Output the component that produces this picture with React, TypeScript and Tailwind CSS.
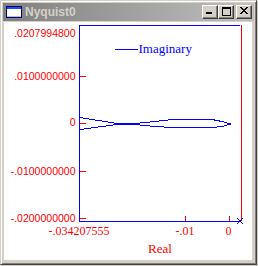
export default function App() {
  const blue = '#0000ff'
  const red = '#ff0000'

  const yLabels = [
    { text: '.0207994800', y: 37 },
    { text: '.0100000000', y: 80 },
    { text: '0', y: 126 },
    { text: '-.0100000000', y: 175 },
    { text: '-.0200000000', y: 222 },
  ]
  const yTicks = [76.5, 123.5, 171.5, 218.5]

  return (
    <div className="w-[258px] h-[266px] bg-[#d4d0c8]">
      {/* Window frame */}
      <div className="w-[257px] h-[265px] flex flex-col p-[2px] bg-[#d4d0c8] border border-t-[#d4d0c8] border-l-[#d4d0c8] border-r-[#404040] border-b-[#404040] shadow-[inset_1px_1px_#ffffff,inset_-1px_-1px_#808080]">
        {/* Title bar (inactive) */}
        <div className="h-[18px] flex items-center pl-[3px] pr-[2px] bg-linear-to-r from-[#808080] to-[#c0c0c0]">
          <svg width="16" height="12" viewBox="0 0 16 12" shapeRendering="crispEdges">
            <rect x="0" y="0" width="16" height="12" fill="#000080" />
            <rect x="1" y="1" width="14" height="2" fill="#2050e0" />
            <rect x="1" y="3" width="14" height="8" fill="#ffffff" />
            <rect x="1" y="10" width="14" height="1" fill="#c0c0c0" />
          </svg>
          <span className="ml-[3px] text-[12px] font-bold leading-none text-[#d4d0c8] font-['Liberation_Sans',Arial,sans-serif]">
            Nyquist0
          </span>
          <div className="ml-auto flex items-center">
            <TitleButton>
              <rect x="0" y="5" width="6" height="2" fill="#000" />
            </TitleButton>
            <TitleButton>
              <rect x="0" y="0" width="9" height="2" fill="#000" />
              <rect x="0" y="0" width="1" height="9" fill="#000" />
              <rect x="8" y="0" width="1" height="9" fill="#000" />
              <rect x="0" y="8" width="9" height="1" fill="#000" />
            </TitleButton>
            <div className="w-[2px]" />
            <TitleButton>
              <rect x="0" y="0" width="2" height="1" fill="#000" />
              <rect x="6" y="0" width="2" height="1" fill="#000" />
              <rect x="1" y="1" width="2" height="1" fill="#000" />
              <rect x="5" y="1" width="2" height="1" fill="#000" />
              <rect x="2" y="2" width="4" height="1" fill="#000" />
              <rect x="3" y="3" width="2" height="1" fill="#000" />
              <rect x="2" y="4" width="4" height="1" fill="#000" />
              <rect x="1" y="5" width="2" height="1" fill="#000" />
              <rect x="5" y="5" width="2" height="1" fill="#000" />
              <rect x="0" y="6" width="2" height="1" fill="#000" />
              <rect x="6" y="6" width="2" height="1" fill="#000" />
            </TitleButton>
          </div>
        </div>

        {/* Client area */}
        <div className="flex-1 mt-[1px] ml-[1px] mr-[2px] mb-[2px] bg-white">
          <svg width="248" height="238" viewBox="4 22 248 238" className="block">
            <g shapeRendering="crispEdges" fill="none" strokeWidth="1">
              <line x1="79" y1="25.5" x2="240" y2="25.5" stroke={blue} />
              <line x1="79.5" y1="25" x2="79.5" y2="222" stroke={blue} />
              <line x1="79" y1="221.5" x2="240" y2="221.5" stroke={blue} />
              <line x1="241.5" y1="25" x2="241.5" y2="221" stroke={red} />
              {yTicks.map((y) => (
                <line key={y} x1="80" y1={y} x2="86" y2={y} stroke={red} />
              ))}
              <line x1="185.5" y1="216" x2="185.5" y2="221" stroke={red} />
              <line x1="229.5" y1="216" x2="229.5" y2="221" stroke={red} />
              {/* legend */}
              <line x1="115" y1="49.5" x2="138" y2="49.5" stroke={blue} />
              {/* nyquist curve */}
              <polyline
                points="80,117.5 117,123.5 135,123.5 155,121.5 172,119.5 212,119.5 222,121.5 229,123.5"
                stroke={blue}
              />
              <polyline
                points="80,129.5 117,124.5 135,124.5 155,126.5 172,127.5 212,127.5 222,126.5 229,124.5"
                stroke={blue}
              />
              <rect x="228" y="123" width="3" height="2" fill={blue} />
            </g>
            {/* end marker */}
            <path d="M237,218 L243,224 M243,218 L237,224" stroke={blue} strokeWidth="1" />

            <g fill={red} fontFamily="'Liberation Sans', Arial, sans-serif" fontSize="10.5" textAnchor="end">
              {yLabels.map((l) => (
                <text key={l.text} x="75.5" y={l.y}>
                  {l.text}
                </text>
              ))}
            </g>
            <g fill={red} fontFamily="'Liberation Serif', 'Times New Roman', serif" fontSize="12" textAnchor="middle">
              <text x="79" y="235">-.034207555</text>
              <text x="185" y="235">-.01</text>
              <text x="228.5" y="235">0</text>
              <text x="160" y="252.5" fontSize="13">
                Real
              </text>
            </g>
            <text
              x="138.5"
              y="53"
              fill={blue}
              fontFamily="'Liberation Serif', 'Times New Roman', serif"
              fontSize="13"
            >
              Imaginary
            </text>
          </svg>
        </div>
      </div>
    </div>
  )
}

function TitleButton({ children }: { children: React.ReactNode }) {
  return (
    <div className="w-[16px] h-[14px] flex items-center justify-center bg-[#d4d0c8] border border-t-white border-l-white border-r-[#404040] border-b-[#404040] shadow-[inset_-1px_-1px_#808080]">
      <svg width="9" height="9" viewBox="0 0 9 9" shapeRendering="crispEdges" className="-mt-[1px]">
        {children}
      </svg>
    </div>
  )
}
